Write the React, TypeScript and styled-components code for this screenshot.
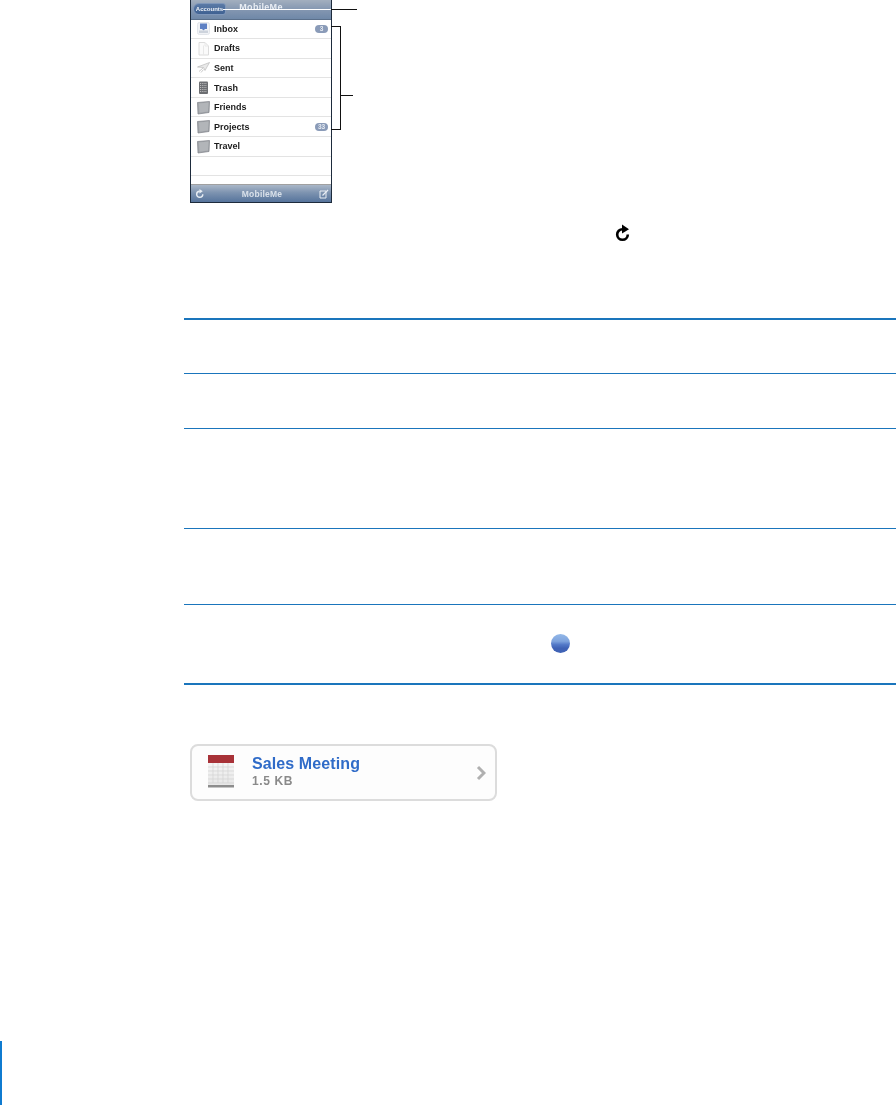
import React from 'react';
import styled, { createGlobalStyle } from 'styled-components';

const GlobalStyle = createGlobalStyle`
  html, body {
    margin: 0;
    padding: 0;
    background: #fff;
  }
  body {
    font-family: "Liberation Sans", Arial, sans-serif;
  }
`;

const Page = styled.div`
  position: relative;
  width: 896px;
  height: 1105px;
  overflow: hidden;
  background: #fff;
`;

const Figure = styled.div`
  position: relative;
  width: 142px;
  margin-left: 190px;
`;

const Phone = styled.div`
  display: flex;
  flex-direction: column;
  width: 142px;
  height: 203px;
  box-sizing: border-box;
  border: 1px solid #1d2b3c;
  border-top: 0;
  background: #fff;
`;

const NavBar = styled.div`
  position: relative;
  display: flex;
  align-items: center;
  justify-content: center;
  height: 19.5px;
  flex: none;
  background: linear-gradient(#a3afbf, #8497b1 50%, #6f88a8);
  border-bottom: 1px solid #5a6f8a;
  box-sizing: border-box;
  filter: blur(0.3px);
`;

const BackButton = styled.div`
  position: absolute;
  left: 2px;
  top: 3px;
  width: 33px;
  height: 12px;
  display: flex;
  align-items: center;
  justify-content: center;
  box-sizing: border-box;
  border: 1px solid #7f97ba;
  border-radius: 6px 3px 3px 6px;
  background: linear-gradient(#5b7aa6, #3f6192);
  font-size: 6px;
  font-weight: 700;
  color: #eef2f7;
`;

const NavTitle = styled.div`
  font-size: 9px;
  font-weight: 700;
  letter-spacing: 0.3px;
  color: #e8edf3;
  margin-top: -5px;
`;

const List = styled.div`
  flex: 1;
  display: flex;
  flex-direction: column;
  filter: blur(0.3px);
`;

const FolderRow = styled.div`
  display: flex;
  align-items: center;
  height: 19.6px;
  box-sizing: border-box;
  padding: 0 3px 0 6px;
  border-bottom: 1px solid #e3e3e3;
`;

const RowIcon = styled.svg`
  width: 13px;
  height: 15px;
  flex: none;
`;

const RowLabel = styled.span`
  flex: 1;
  margin-left: 4px;
  font-size: 9px;
  font-weight: 700;
  color: #1c1c1c;
`;

const CountBadge = styled.span`
  display: flex;
  align-items: center;
  justify-content: center;
  width: 13px;
  height: 8px;
  border-radius: 4px;
  background: #8a9bb8;
  color: #e6ebf2;
  font-size: 6.5px;
  font-weight: 700;
`;

const BlankRow = styled(FolderRow)``;

const ToolBar = styled.div`
  flex: none;
  display: flex;
  align-items: center;
  justify-content: space-between;
  height: 18px;
  padding: 0 2px 0 4px;
  box-sizing: border-box;
  background: linear-gradient(#aab7c8, #7d93b0 45%, #56749c);
  border-top: 1px solid #a0a0a0;
  filter: blur(0.3px);
`;

const ToolTitle = styled.span`
  font-size: 8.5px;
  font-weight: 700;
  color: #d9e1ea;
  letter-spacing: 0.2px;
`;

const CalloutLine = styled.div`
  position: absolute;
  left: 33px;
  top: 9px;
  width: 134px;
  height: 1px;
  background: linear-gradient(to right, #fff 108px, #111 108px);
`;

const Bracket = styled.div`
  position: absolute;
  left: 141px;
  top: 26px;
  width: 10px;
  height: 104px;
  border: 1px solid #111;
  border-left: 0;
  box-sizing: border-box;
`;

const BracketStub = styled.div`
  position: absolute;
  left: 151px;
  top: 95px;
  width: 12px;
  height: 1px;
  background: #111;
`;

const RefreshRow = styled.div`
  display: flex;
  padding-left: 614px;
  margin-top: 21px;
  height: 19px;
`;

const Table = styled.div`
  margin: 75px 0 0 184px;
  border-top: 2px solid #1a75bc;
`;

const TableRow = styled.div<{ $height: number; $last?: boolean }>`
  height: ${p => p.$height}px;
  box-sizing: border-box;
  display: flex;
  align-items: center;
  padding-left: 367px;
  border-bottom: ${p => (p.$last ? 2 : 1)}px solid #1a75bc;
`;

const BlueDot = styled.div`
  width: 19px;
  height: 19px;
  margin-bottom: 2px;
  border-radius: 50%;
  background: linear-gradient(#93b8e8, #7ea3dd 38%, #5379c8 56%, #3f62b5 75%);
`;

const Attachment = styled.div`
  display: flex;
  align-items: center;
  width: 307px;
  height: 57px;
  margin: 59px 0 0 190px;
  box-sizing: border-box;
  padding: 0 9px 0 14px;
  border: 2px solid #dcdcdc;
  border-radius: 8px;
  background: #fdfdfd;
  filter: blur(0.4px);
`;

const AttachmentText = styled.div`
  flex: 1;
  margin-left: 16px;
`;

const AttachmentName = styled.div`
  font-size: 16px;
  font-weight: 700;
  line-height: 18px;
  letter-spacing: 0.1px;
  color: #2f6bc8;
`;

const AttachmentSize = styled.div`
  font-size: 12px;
  font-weight: 700;
  line-height: 17px;
  letter-spacing: 0.6px;
  color: #8a8a8a;
`;

const SideBar = styled.div`
  position: absolute;
  left: 0;
  top: 1041px;
  width: 2px;
  height: 64px;
  background: #0f7bd0;
`;

const InboxIcon = () => (
  <RowIcon viewBox="0 0 13 15">
    <rect x="0.5" y="1.5" width="12" height="12" rx="2" fill="#f1f3f6" stroke="#e2e5ea" />
    <path d="M3 2.500h7v5.500H8l-1.500 1.500L5 8H3z" fill="#5d80c4" />
    <rect x="2" y="9.500" width="9" height="2.500" fill="#cdd3dc" />
  </RowIcon>
);

const DraftIcon = () => (
  <RowIcon viewBox="0 0 13 15">
    <path d="M2 1.500h6l3.500 3.500v9H2z" fill="#fafafa" stroke="#dcdcdc" />
    <path d="M8 1.500V5h3.500M6.500 4.500V14" fill="none" stroke="#e8e8e8" />
  </RowIcon>
);

const SentIcon = () => (
  <RowIcon viewBox="0 0 13 15">
    <path d="M0.500 7l12-4.500-4.500 8-1.500-3z" fill="#e9e9e9" stroke="#b0b0b0" strokeWidth="0.6" />
    <path d="M2 11.500l4-3.500M4 12.500l2.500-3" stroke="#bdbdbd" strokeWidth="0.8" />
  </RowIcon>
);

const TrashIcon = () => (
  <RowIcon viewBox="0 0 13 15">
    <rect x="2" y="1.500" width="9" height="12.500" rx="1" fill="#6c6e72" />
    <path d="M3 3.500h7M3 5.500h7M3 7.500h7M3 9.500h7M3 11.500h7" stroke="#cfcfcf" strokeWidth="0.8" strokeDasharray="1 0.8" />
  </RowIcon>
);

const FolderIcon = () => (
  <RowIcon viewBox="0 0 13 15">
    <path d="M0.500 2.500l12-1-0.500 11-11 1.500z" fill="#a3a7ab" stroke="#7c8086" strokeWidth="0.7" />
    <path d="M2 3.500l9.500-1-0.500 9-8.500 1z" fill="#b2b5b9" />
  </RowIcon>
);

const folders = [
  { label: 'Inbox', icon: <InboxIcon />, count: '3' },
  { label: 'Drafts', icon: <DraftIcon /> },
  { label: 'Sent', icon: <SentIcon /> },
  { label: 'Trash', icon: <TrashIcon /> },
  { label: 'Friends', icon: <FolderIcon /> },
  { label: 'Projects', icon: <FolderIcon />, count: '33' },
  { label: 'Travel', icon: <FolderIcon /> },
];

const rowHeights = [54, 55, 100, 76, 80];

export default function App() {
  return (
    <Page>
      <GlobalStyle />
      <Figure>
        <Phone>
          <NavBar>
            <BackButton>Accounts</BackButton>
            <NavTitle>MobileMe</NavTitle>
          </NavBar>
          <List>
            {folders.map(folder => (
              <FolderRow key={folder.label}>
                {folder.icon}
                <RowLabel>{folder.label}</RowLabel>
                {folder.count && <CountBadge>{folder.count}</CountBadge>}
              </FolderRow>
            ))}
            <BlankRow />
          </List>
          <ToolBar>
            <svg width="10" height="10" viewBox="0 0 18 18">
              <path d="M14 9.500a5.500 5.500 0 1 1-5.500-5.500" fill="none" stroke="#e8edf3" strokeWidth="2.600" />
              <path d="M8 0l6 4-6 4z" fill="#e8edf3" />
            </svg>
            <ToolTitle>MobileMe</ToolTitle>
            <svg width="10" height="10" viewBox="0 0 10 10">
              <path d="M1 2h6v7H1z" fill="none" stroke="#e8edf3" />
              <path d="M3.500 6.500L9 1" stroke="#e8edf3" strokeWidth="1.200" />
            </svg>
          </ToolBar>
        </Phone>
        <CalloutLine />
        <Bracket />
        <BracketStub />
      </Figure>
      <RefreshRow>
        <svg width="18" height="19" viewBox="0 0 18 19">
          <path d="M13.800 10.500a5.300 5.300 0 1 1-5.300-5.300" fill="none" stroke="#000" strokeWidth="2.600" />
          <path d="M8 0.500l7 4.700-7 4.300z" fill="#000" />
        </svg>
      </RefreshRow>
      <Table>
        {rowHeights.map((height, i) => (
          <TableRow key={i} $height={height} $last={i === rowHeights.length - 1}>
            {i === 4 && <BlueDot />}
          </TableRow>
        ))}
      </Table>
      <Attachment>
        <svg width="30" height="36" viewBox="0 2 30 36">
          <defs>
            <linearGradient id="page" x1="0" y1="0" x2="0" y2="1">
              <stop offset="0" stopColor="#fafafa" />
              <stop offset="1" stopColor="#e6e6e6" />
            </linearGradient>
          </defs>
          <rect x="2" y="2" width="26" height="32" fill="url(#page)" />
          <rect x="2" y="2" width="26" height="8" fill="#a83238" />
          <path d="M2 14h26M2 18h26M2 22h26M2 26h26M2 30h26M7 10v20M12 10v20M17 10v20M22 10v20" stroke="#d2d2d2" strokeWidth="0.7" />
          <rect x="2" y="32" width="26" height="2.500" fill="#8d8d8d" />
        </svg>
        <AttachmentText>
          <AttachmentName>Sales Meeting</AttachmentName>
          <AttachmentSize>1.5 KB</AttachmentSize>
        </AttachmentText>
        <svg width="10" height="16" viewBox="0 0 10 16">
          <path d="M2 2l6 6-6 6" fill="none" stroke="#b0b0b0" strokeWidth="3" />
        </svg>
      </Attachment>
      <SideBar />
    </Page>
  );
}
